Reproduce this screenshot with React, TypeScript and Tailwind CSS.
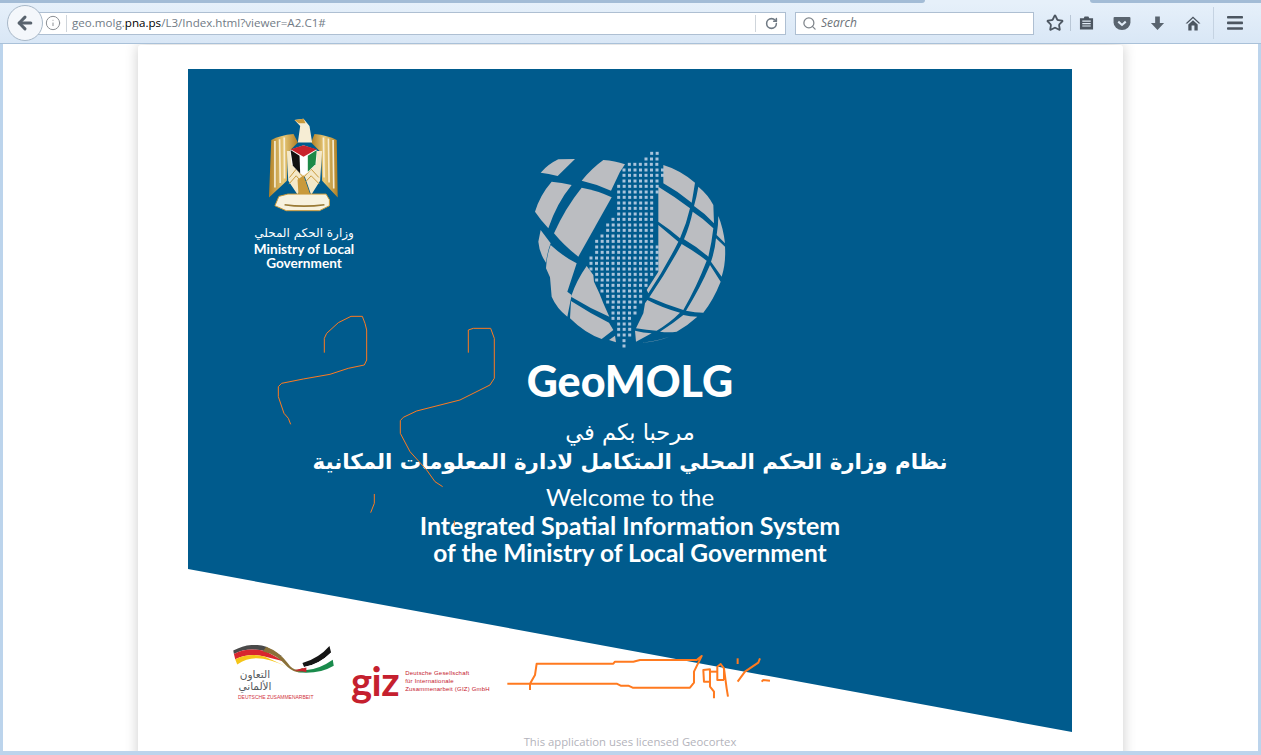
import React from 'react';
import { ArrowLeft, Info, RotateCw, Search, Star } from 'lucide-react';

// rangées de points de la carte : [y, xmin, xmax] dans le repère du zoom
const dotRows: number[][] = [
    [40, 425, 442], [57, 408, 442], [73, 358, 442], [90, 342, 458], [106, 342, 458], [123, 342, 442],
    [139, 326, 442], [156, 326, 442], [172, 326, 425], [189, 326, 425], [205, 326, 425], [222, 326, 425],
    [238, 309, 425], [255, 293, 425], [271, 293, 425], [288, 276, 425], [304, 260, 425], [321, 260, 442],
    [337, 260, 442], [354, 243, 442], [370, 243, 442], [387, 243, 442], [403, 260, 425], [420, 260, 408],
    [436, 276, 408], [453, 276, 392], [469, 293, 392], [486, 293, 392], [502, 309, 375], [519, 309, 375],
    [535, 309, 358], [552, 326, 358], [568, 326, 358], [585, 326, 358], [602, 342, 342], [618, 342, 342],
];

const globePatches = [
    'M92 98Q115 72 145 58L195 57L143 108Q115 100 92 98Z',
    'M215 122Q245 85 280 60Q315 62 345 73L330 95L303 152Q260 132 215 122Z',
    'M75 215Q90 165 125 125Q155 127 185 135Q140 190 115 265Q92 240 75 215Z',
    'M132 280Q165 205 215 143Q265 152 305 172L205 350Q165 320 132 280Z',
    'M92 270L122 310Q112 335 108 368Q88 340 85 305Z',
    'M122 315Q160 350 200 370L172 455L185 465L172 530Q140 505 125 470L120 412L108 385Q110 345 122 315Z',
    'M230 378L250 405L252 425L268 460L280 490L298 530Q240 505 183 470Q200 420 230 378Z',
    'M183 483Q240 520 297 548L310 570L275 597Q225 580 180 535Z',
    'M297 600L315 587L318 607Z',
    'M460 75Q510 90 555 128Q550 160 545 188Q505 155 460 130Z',
    'M565 140Q595 165 610 195L612 250Q585 220 552 198Q560 170 565 140Z',
    'M625 228Q640 265 645 310L620 285Q625 255 625 228Z',
    'M445 140Q495 170 540 205Q530 250 510 295Q480 268 445 245Z',
    'M548 215Q580 235 610 265Q605 310 595 350Q560 320 522 298Q540 255 548 215Z',
    'M618 295L645 320Q648 370 635 410L603 365Q615 330 618 295Z',
    'M445 255L505 305Q465 385 415 460L410 450L445 395Z',
    'M515 312Q555 335 590 362Q560 440 520 510Q470 495 418 472Q470 395 515 312Z',
    'M600 375L632 425Q610 480 580 518Q555 518 528 512Q570 445 600 375Z',
    'M412 480Q460 505 510 518Q480 548 440 572Q410 570 378 565L400 520L405 490Z',
    'M520 525Q540 530 562 530Q535 555 500 575Q475 578 450 575Q490 550 520 525Z',
    'M375 572Q400 578 425 580L378 605Z',
    'M395 608Q440 605 478 590Q440 603 395 608Z',
];

function GlobeLogo() {
    const dots: React.ReactNode[] = [];
    dotRows.forEach(([y, a, b]) => {
        for (let x = a; x <= b + 1; x += 16.5) {
            dots.push(<rect key={`${x}-${y}`} x={x - 4.5} y={y - 4.5} width="9" height="9" fill="#a9c4dc" />);
        }
    });
    return (
        <svg viewBox="0 0 720 630" className="w-[240px] h-[210px] block">
            {globePatches.map((p, i) => <path key={i} d={p} fill="#bbbdc1" />)}
            {dots}
        </svg>
    );
}

function Emblem() {
    return (
        <svg viewBox="110 20 230 295" className="w-[77px] h-[98px] block">
            <defs>
                <linearGradient id="gold" x1="0" y1="0" x2="1" y2="0">
                    <stop offset="0" stopColor="#b07f24" />
                    <stop offset="0.5" stopColor="#e6c878" />
                    <stop offset="1" stopColor="#b07f24" />
                </linearGradient>
            </defs>
            <path d="M125 92 Q150 78 192 74 L205 100 L175 130 L172 215 L118 265 Z" fill="url(#gold)" />
            <path d="M322 92 Q295 78 255 74 L245 100 L275 130 L278 215 L325 265 Z" fill="url(#gold)" />
            <path d="M195 32 L222 28 L240 50 L248 100 L205 100 L212 50 Z" fill="#f6edd4" />
            <path d="M195 32 L222 28 L228 42 L208 42 Z" fill="#c99a3c" />
            <path d="M136 95 L136 235 M150 90 L152 222 M164 85 L165 208 M282 85 L284 205 M297 88 L299 220 M311 92 L313 238" stroke="#f6edd4" strokeWidth="5" fill="none" />
            <path d="M172 125 L278 125 L272 215 L245 258 L225 200 L205 258 L176 215 Z" fill="#f4e8c8" />
            <path d="M180 205 L200 180 L222 205 L245 180 L268 205 M178 225 L200 200 L222 225 L245 200 L270 225" stroke="#c99a3c" strokeWidth="3" fill="none" />
            <path d="M181 122 L222 108 L263 122 L260 165 L235 190 L222 198 L208 190 L186 165 Z" fill="#ffffff" />
            <path d="M183 120 L222 108 L262 120 L222 143 Z" fill="#c8232c" />
            <path d="M183 122 L210 140 L212 193 L190 170 Z" fill="#111111" />
            <path d="M262 122 L235 140 L235 188 L258 165 Z" fill="#1d8a47" />
            <path d="M204 212 L222 198 L243 258 L207 258 Z" fill="#c99a3c" />
            <path d="M148 262 L175 255 L290 255 L300 272 L300 290 L270 305 L170 305 L136 290 Z" fill="#f8f2df" stroke="#c99a3c" strokeWidth="3" />
            <path d="M165 287 Q222 296 285 287" stroke="#9a7a35" strokeWidth="5" fill="none" />
        </svg>
    );
}

function GermanCooperation() {
    return (
        <div className="flex flex-col w-[100px]">
            <svg viewBox="40 45 305 85" className="w-[101px] h-[28px] block">
                <path d="M40 62 Q90 35 140 50 L190 80 L140 65 Q85 50 42 72 Z" fill="#4a4a4a" />
                <path d="M42 72 Q85 50 140 65 L195 95 L135 80 Q90 68 46 88 Z" fill="#d8262e" />
                <path d="M46 88 Q90 68 135 80 L205 112 Q150 85 110 85 Q80 85 52 104 Z" fill="#f5c518" />
                <path d="M140 50 Q180 65 205 100 Q225 130 250 115 L262 125 Q230 135 205 112 Q170 72 130 65 Z" fill="#8a7038" />
                <path d="M250 100 Q300 85 332 48 L337 68 Q300 105 255 112 Z" fill="#161616" />
                <path d="M255 112 Q300 105 337 68 L340 88 Q300 120 258 122 Z" fill="#ffffff" />
                <path d="M258 122 Q300 120 342 90 L345 108 Q300 135 235 128 Z" fill="#1a8b4c" />
                <path d="M225 122 L262 113 L262 127 Z" fill="#c8232c" />
            </svg>
            <div dir="rtl" className="-mt-[5px] font-['DejaVu_Sans',sans-serif] text-[10.5px] leading-[12px] text-center text-[#555a5e] w-[38px] ml-[3px]">التعاون الألماني</div>
            <div className="ml-[5px] mt-[2px] font-['Liberation_Sans',sans-serif] text-[5px] leading-[6px] text-[#d2323c] whitespace-nowrap">DEUTSCHE ZUSAMMENARBEIT</div>
        </div>
    );
}

function GizLogo() {
    return (
        <div className="flex items-end gap-[6px]">
            <div className="font-['Lato',sans-serif] font-bold text-[40px] leading-[30px] h-[34px] tracking-[-0.5px] text-[#c5202e]">giz</div>
            <div className="font-['Liberation_Sans',sans-serif] text-[6px] leading-[8px] tracking-[0.2px] text-[#c5202e] whitespace-nowrap mb-[7px]">
                <div>Deutsche Gesellschaft</div>
                <div>für Internationale</div>
                <div>Zusammenarbeit (GIZ) GmbH</div>
            </div>
        </div>
    );
}

export default function App() {
    return (
        <div className="relative w-[1261px] h-[755px] overflow-hidden flex flex-col bg-white font-['Open_Sans',sans-serif]">
            {/* barre des onglets */}
            <div className="h-[3px] flex bg-[#e6f0fa]">
                <div className="w-[925px] bg-[#a3bcd6] rounded-br-[6px]" />
                <div className="w-[165px]" />
                <div className="flex-1 bg-[#a3bcd6] rounded-bl-[6px]" />
            </div>
            {/* barre d'outils du navigateur */}
            <div className="h-[41px] flex items-center pl-[7px] pr-[11px] bg-gradient-to-b from-[#e6f0fa] to-[#d9e7f6] border-b border-[#a9c1d9]">
                <div className="z-10 w-[36px] h-[36px] rounded-full bg-[#f4f7fb] border border-[#a8b8c8] flex items-center justify-center">
                    <ArrowLeft size={20} strokeWidth={3.6} className="text-[#59636e]" />
                </div>
                <div className="-ml-[7px] w-[750px] h-[23px] bg-white border border-[#aebfd2] flex items-center pl-[9px] pr-[6px]">
                    <Info size={16} className="-ml-[1px] text-[#8b8f94]" strokeWidth={1.5} />
                    <div className="w-px h-[17px] bg-[#cfd5db] ml-[5px]" />
                    <div className="ml-[5px] text-[11.6px] text-[#717b86] whitespace-nowrap flex-1">
                        geo.molg.<span className="text-black">pna.ps</span>/L3/Index.html?viewer=A2.C1#
                    </div>
                    <div className="w-px h-[17px] bg-[#cfd5db]" />
                    <RotateCw size={13} strokeWidth={2.8} className="ml-[9px] mr-[1px] text-[#6f7983]" />
                </div>
                <div className="ml-[9px] w-[239px] h-[23px] bg-white border border-[#aebfd2] flex items-center pl-[6px] gap-[4px]">
                    <Search size={15} strokeWidth={2} className="text-[#7f858b]" />
                    <span className="text-[12px] italic text-[#6d7278]">Search</span>
                </div>
                <div className="ml-[12px] flex items-center text-[#4c5661]">
                    <Star size={18} strokeWidth={2.4} className="w-[18px]" />
                    <div className="w-px h-[16px] bg-[#b9c7d6] ml-[6px] mr-[8px]" />
                    <svg viewBox="0 0 16 16" className="w-[15px] h-[16px]" fill="#4c5661">
                        <path d="M1 3h4l1-2h4l1 2h4v12H1z" />
                        <path d="M3.5 6h9M3.5 8.6h9M3.5 11.2h9" stroke="#e2edf8" strokeWidth="1.2" />
                    </svg>
                    <svg viewBox="0 0 18 16" className="ml-[19px] w-[18px] h-[15px]">
                        <path d="M1 1h16a1 1 0 0 1 1 1v5a9 8 0 0 1-18 0V2a1 1 0 0 1 1-1z" fill="#59646f" />
                        <path d="M5 6l4 3.5L13 6" fill="none" stroke="#e2edf8" strokeWidth="2.2" />
                    </svg>
                    <svg viewBox="0 0 16 16" className="ml-[19px] w-[15px] h-[16px]" fill="#59646f">
                        <path d="M5.5 1h5v7H15l-7 7.5L1 8h4.5z" />
                    </svg>
                    <svg viewBox="0 0 16 16" className="ml-[20px] w-[16px] h-[15px]" fill="#4c5661">
                        <path d="M8 .5L0 8h2l6-5.5L14 8h2z" />
                        <path d="M8 4.5L3 9v6.5h3.5V10h3v5.5H13V9z" />
                    </svg>
                    <div className="w-px h-[32px] bg-[#c5d3e2] ml-[12px] mr-[13px]" />
                    <svg viewBox="0 0 16 14" className="w-[16px] h-[14px]" fill="#4c5661">
                        <rect x="0" y="0" width="16" height="2.6" rx="0.8" />
                        <rect x="0" y="5.6" width="16" height="2.6" rx="0.8" />
                        <rect x="0" y="11.2" width="16" height="2.6" rx="0.8" />
                    </svg>
                </div>
            </div>

            {/* contenu de la page */}
            <div className="flex-1 flex justify-center border-x-[3px] border-b-[4px] border-[#bcd4ec] overflow-hidden">
                <div className="w-[985px] h-[720px] mt-[1px] ml-[-1px] bg-white rounded-t-[3px] shadow-[0_0_14px_rgba(0,0,0,0.2)] flex flex-col items-center pt-[24px]">
                    <div className="relative w-[884px] h-[663px] shrink-0">
                        <div className="absolute inset-0 bg-[#005b8d] [clip-path:polygon(0_0,100%_0,100%_100%,0_500px)]" />
                        <div className="relative h-full flex flex-col text-white font-['Lato',sans-serif]">
                            <div className="grid grid-cols-[1fr_240px_1fr] h-[281px]">
                                <div className="pt-[47px] pl-[65px] flex flex-col items-start">
                                    <div className="w-[102px] flex flex-col items-center">
                                        <Emblem />
                                        <div dir="rtl" className="mt-[12px] font-['DejaVu_Sans',sans-serif] text-[12px] leading-[15px] whitespace-nowrap">وزارة الحكم المحلي</div>
                                        <div className="mt-[1px] text-[13.6px] leading-[14px] font-bold whitespace-nowrap text-center">Ministry of Local<br />Government</div>
                                    </div>
                                </div>
                                <div className="pt-[71px]">
                                    <GlobeLogo />
                                </div>
                                <div />
                            </div>
                            <div className="text-center font-black text-[43px] leading-[50px] mt-[6px]">GeoMOLG</div>
                            <div dir="rtl" className="mt-[11px] text-center font-['DejaVu_Sans',sans-serif] text-[22.5px] leading-[30px]">مرحبا بكم في</div>
                            <div dir="rtl" className="text-center font-['DejaVu_Sans',sans-serif] font-bold text-[21.4px] leading-[30px]">نظام وزارة الحكم المحلي المتكامل لادارة المعلومات المكانية</div>
                            <div className="mt-[6px] text-center text-[24px] leading-[28px]">Welcome to the</div>
                            <div className="text-center font-bold text-[25px] leading-[28px]">Integrated Spatial Information System</div>
                            <div className="text-center font-bold text-[24.5px] leading-[28px]">of the Ministry of Local Government</div>
                            <div className="mt-[78px] pl-[45px] flex items-end gap-[18px]">
                                <GermanCooperation />
                                <GizLogo />
                            </div>
                        </div>
                    </div>
                    <div className="mt-[2px] text-[11.3px] leading-[16px] text-[#b3b3bb]">This application uses licensed Geocortex</div>
                </div>
            </div>

            {/* gribouillis orange par-dessus la capture */}
            <svg viewBox="0 0 1261 755" className="absolute inset-0 w-[1261px] h-[755px] pointer-events-none" fill="none" stroke="#ff7a1f" strokeLinejoin="round">
                <g transform="translate(270 310) scale(0.3333)" strokeWidth="3">
                    <polyline points="163,128 163,85 170,70 205,38 243,19 277,19 285,40 290,60 290,150 283,165 235,175 180,193 100,207 35,220 25,230 25,260 42,310 55,325 62,343" />
                    <polyline points="595,128 595,60 610,55 662,55 673,85 673,205 660,225 570,270 440,303 400,322 391,332 391,370 420,425 470,480 495,515 518,530" />
                    <polyline points="313,552 313,580 302,608" />
                    <polyline points="553,632 553,650" />
                </g>
                <g transform="translate(500 640) scale(0.3333)" strokeWidth="6">
                    <polyline points="22,131 90,131 350,131 362,137 385,137 398,143 570,143 582,128 582,95 605,48 590,60 420,60 400,65 345,65 340,71 110,71 105,105 90,131 90,150" />
                    <polyline points="630,125 612,125 610,90 630,88 630,125 630,140 642,155 642,175" />
                    <polyline points="630,95 652,95" />
                    <polyline points="672,120 652,120 652,80 662,72 672,85 680,145 684,170" />
                    <polyline points="672,85 672,120" />
                    <polyline points="713,55 713,72" />
                    <polyline points="713,125 735,95 775,68 780,55" />
                    <polyline points="785,125 790,120 810,122" />
                </g>
            </svg>
        </div>
    );
}
